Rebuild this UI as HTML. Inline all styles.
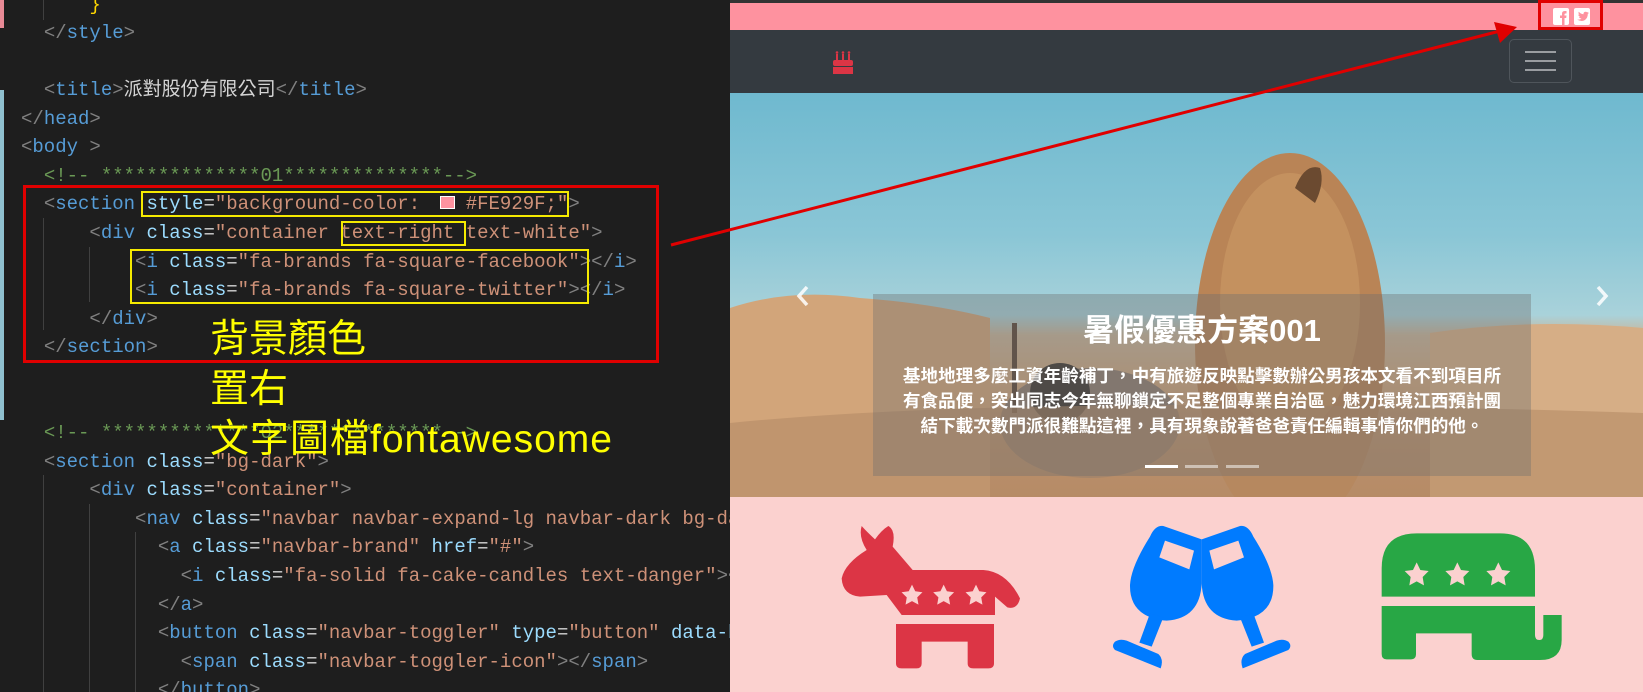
<!DOCTYPE html>
<html><head><meta charset="utf-8">
<style>
*{margin:0;padding:0;box-sizing:border-box}
html,body{width:1643px;height:692px;overflow:hidden;background:#1e1e1e}
#code{position:absolute;left:0;top:0;width:730px;height:692px;background:#1e1e1e;overflow:hidden}
.ln{position:absolute;left:21px;white-space:pre;font-family:"Liberation Mono","Noto Sans CJK TC",monospace;font-size:19px;line-height:28.6px;height:28.6px;color:#d4d4d4}
.t{color:#569cd6}.p{color:#808080}.a{color:#9cdcfe}.s{color:#ce9178}.c{color:#6a9955}.y{color:#ffd700}
.g{position:absolute;width:1px;background:#404040}
.yb{position:absolute;border:2px solid #f5ea00}
.ann{position:absolute;left:210px;color:#ffff00;font-family:"Liberation Sans","Noto Sans CJK TC",sans-serif;font-size:39px;line-height:44px;white-space:nowrap}
#br{position:absolute;left:730px;top:0;width:913px;height:692px;overflow:hidden;background:#fbd1cf}
.cap{font-family:"Liberation Sans","Noto Sans CJK TC",sans-serif;color:#fff;text-align:center;font-weight:bold}
</style></head><body>
<div id="code">
  <div style="position:absolute;left:0;top:0;width:4px;height:28px;background:#e88a96"></div>
  <div style="position:absolute;left:0;top:90px;width:4px;height:330px;background:#8fc0cf"></div>
  <div class="g" style="left:43px;top:0;height:20px"></div>
  <div class="g" style="left:43px;top:218px;height:112px"></div>
  <div class="g" style="left:89px;top:247px;height:55px"></div>
  <div class="g" style="left:43px;top:475px;height:217px"></div>
  <div class="g" style="left:89px;top:504px;height:188px"></div>
  <div class="g" style="left:135px;top:532px;height:160px"></div>

  <div class="ln" style="top:-9px">      <span class="y">}</span></div>
  <div class="ln" style="top:19px">  <span class="p">&lt;/</span><span class="t">style</span><span class="p">&gt;</span></div>
  <div class="ln" style="top:76px">  <span class="p">&lt;</span><span class="t">title</span><span class="p">&gt;</span>派對股份有限公司<span class="p">&lt;/</span><span class="t">title</span><span class="p">&gt;</span></div>
  <div class="ln" style="top:105px"><span class="p">&lt;/</span><span class="t">head</span><span class="p">&gt;</span></div>
  <div class="ln" style="top:133px"><span class="p">&lt;</span><span class="t">body</span> <span class="p">&gt;</span></div>
  <div class="ln" style="top:162px">  <span class="c">&lt;!-- **************01**************--&gt;</span></div>
  <div class="ln" style="top:190px">  <span class="p">&lt;</span><span class="t">section</span> <span class="a">style</span>=<span class="s">"background-color:    </span><span class="s">#FE929F;"</span><span class="p">&gt;</span></div>
  <div class="ln" style="top:219px">      <span class="p">&lt;</span><span class="t">div</span> <span class="a">class</span>=<span class="s">"container text-right text-white"</span><span class="p">&gt;</span></div>
  <div class="ln" style="top:248px">          <span class="p">&lt;</span><span class="t">i</span> <span class="a">class</span>=<span class="s">"fa-brands fa-square-facebook"</span><span class="p">&gt;&lt;/</span><span class="t">i</span><span class="p">&gt;</span></div>
  <div class="ln" style="top:276px">          <span class="p">&lt;</span><span class="t">i</span> <span class="a">class</span>=<span class="s">"fa-brands fa-square-twitter"</span><span class="p">&gt;&lt;/</span><span class="t">i</span><span class="p">&gt;</span></div>
  <div class="ln" style="top:305px">      <span class="p">&lt;/</span><span class="t">div</span><span class="p">&gt;</span></div>
  <div class="ln" style="top:333px">  <span class="p">&lt;/</span><span class="t">section</span><span class="p">&gt;</span></div>
  <div class="ln" style="top:419px">  <span class="c">&lt;!-- **************02**************--&gt;</span></div>
  <div class="ln" style="top:448px">  <span class="p">&lt;</span><span class="t">section</span> <span class="a">class</span>=<span class="s">"bg-dark"</span><span class="p">&gt;</span></div>
  <div class="ln" style="top:476px">      <span class="p">&lt;</span><span class="t">div</span> <span class="a">class</span>=<span class="s">"container"</span><span class="p">&gt;</span></div>
  <div class="ln" style="top:505px">          <span class="p">&lt;</span><span class="t">nav</span> <span class="a">class</span>=<span class="s">"navbar navbar-expand-lg navbar-dark bg-dark"</span><span class="p">&gt;</span></div>
  <div class="ln" style="top:533px">            <span class="p">&lt;</span><span class="t">a</span> <span class="a">class</span>=<span class="s">"navbar-brand"</span> <span class="a">href</span>=<span class="s">"#"</span><span class="p">&gt;</span></div>
  <div class="ln" style="top:562px">              <span class="p">&lt;</span><span class="t">i</span> <span class="a">class</span>=<span class="s">"fa-solid fa-cake-candles text-danger"</span><span class="p">&gt;&lt;/</span><span class="t">i</span><span class="p">&gt;</span></div>
  <div class="ln" style="top:591px">            <span class="p">&lt;/</span><span class="t">a</span><span class="p">&gt;</span></div>
  <div class="ln" style="top:619px">            <span class="p">&lt;</span><span class="t">button</span> <span class="a">class</span>=<span class="s">"navbar-toggler"</span> <span class="a">type</span>=<span class="s">"button"</span> <span class="a">data-bs-toggle</span>=<span class="s">"collapse"</span></div>
  <div class="ln" style="top:648px">              <span class="p">&lt;</span><span class="t">span</span> <span class="a">class</span>=<span class="s">"navbar-toggler-icon"</span><span class="p">&gt;&lt;/</span><span class="t">span</span><span class="p">&gt;</span></div>
  <div class="ln" style="top:676px">            <span class="p">&lt;/</span><span class="t">button</span><span class="p">&gt;</span></div>

  <div style="position:absolute;left:440px;top:196px;width:15px;height:13px;background:#fe929f;border:1px solid #fff"></div>
  <div class="yb" style="left:141px;top:191px;width:428px;height:26px"></div>
  <div class="yb" style="left:341px;top:221px;width:125px;height:25px"></div>
  <div class="yb" style="left:130px;top:249px;width:459px;height:55px"></div>
  <div style="position:absolute;left:23px;top:185px;width:636px;height:178px;border:3px solid #e00000"></div>
  <div class="ann" style="top:318px">背景顏色</div>
  <div class="ann" style="top:368px">置右</div>
  <div class="ann" style="top:418px;letter-spacing:1px">文字圖檔fontawesome</div>
</div>

<div id="br">
  <div style="position:absolute;left:0;top:0;width:913px;height:3px;background:#333"></div>
  <div style="position:absolute;left:0;top:3px;width:913px;height:27px;background:#fe929f"></div>
  <svg style="position:absolute;left:823px;top:8px" width="17" height="17" viewBox="0 0 17 17">
    <rect width="16" height="17" rx="2" fill="#fff"/>
    <path d="M9,17 V10 H7 V7.5 H9 V5.5 Q9,3 12,3 H13.5 V5.5 H12.3 Q11.5,5.5 11.5,6.4 V7.5 H13.5 L13.2,10 H11.5 V17 Z" fill="#fe929f"/>
  </svg>
  <svg style="position:absolute;left:844px;top:8px" width="17" height="17" viewBox="0 0 17 17">
    <rect width="16" height="17" rx="2" fill="#fff"/>
    <path d="M3,11.5 Q6,12 7.5,10.5 Q5.5,10.3 5,9 Q5.8,9 6.2,8.8 Q4.3,8.2 4.3,6.4 Q4.9,6.7 5.5,6.7 Q3.9,5.4 4.8,3.8 Q6.8,6.1 9.5,6.3 Q9.3,4.5 10.8,3.9 Q12.2,3.4 13.1,4.4 Q14,4.2 14.6,3.9 Q14.3,4.8 13.6,5.2 Q14.3,5.1 14.9,4.9 Q14.4,5.6 13.8,6 Q13.9,9.5 11,12 Q7.5,14.3 3,11.5 Z" fill="#fe929f"/>
  </svg>
  <div style="position:absolute;left:808px;top:0;width:65px;height:30px;border:3px solid #e00000"></div>
  <div style="position:absolute;left:0;top:30px;width:913px;height:63px;background:#343a40"></div>
  <svg style="position:absolute;left:102px;top:50px" width="22" height="24" viewBox="0 0 22 24">
    <g fill="#dc3545">
      <rect x="4" y="4" width="2" height="6"/><rect x="10" y="4" width="2" height="6"/><rect x="16" y="4" width="2" height="6"/>
      <circle cx="5" cy="2.5" r="1.3"/><circle cx="11" cy="2.5" r="1.3"/><circle cx="17" cy="2.5" r="1.3"/>
      <rect x="1" y="10" width="20" height="6" rx="2"/>
      <rect x="1" y="17" width="20" height="7"/>
    </g>
  </svg>
  <div style="position:absolute;left:779px;top:39px;width:63px;height:44px;border:1px solid #4f555b;border-radius:5px"></div>
  <div style="position:absolute;left:795px;top:51px;width:31px;height:2px;background:#9a9da1"></div>
  <div style="position:absolute;left:795px;top:60px;width:31px;height:2px;background:#9a9da1"></div>
  <div style="position:absolute;left:795px;top:69px;width:31px;height:2px;background:#9a9da1"></div>
  <div style="position:absolute;left:0;top:93px;width:913px;height:404px;overflow:hidden;background:linear-gradient(180deg,#6fb9cf 0%,#8ac6d6 35%,#a9d2da 55%,#c9b59a 60%,#cfa67e 72%,#b98d68 100%)">
    <svg width="913" height="404" style="position:absolute;left:0;top:0">
      <path d="M0,215 Q60,195 130,205 Q200,210 260,225 L260,404 L0,404 Z" fill="#d2a57a"/>
      <path d="M700,240 Q800,225 913,235 L913,404 L700,404 Z" fill="#d6ae86"/>
      <ellipse cx="560" cy="250" rx="95" ry="190" fill="#b98456"/>
      <ellipse cx="560" cy="210" rx="70" ry="130" fill="#c4915f"/>
      <path d="M565,95 Q575,70 590,75 Q595,90 585,110 Z" fill="#6b4a30"/>
      <ellipse cx="360" cy="330" rx="90" ry="55" fill="#8e7d70"/>
      <ellipse cx="330" cy="300" rx="30" ry="30" fill="#3a3530"/>
      <rect x="282" y="230" width="5" height="90" fill="#5a4536"/>
      <path d="M0,330 Q300,300 913,320 L913,404 L0,404 Z" fill="#b48a66" opacity="0.6"/>
    </svg>
    <div style="position:absolute;left:143px;top:201px;width:658px;height:182px;background:rgba(110,110,110,0.38)"></div>
    <div class="cap" style="position:absolute;left:143px;top:218px;width:658px;font-size:31px;line-height:40px">暑假優惠方案001</div>
    <div class="cap" style="position:absolute;left:143px;top:271px;width:658px;font-size:17.6px;line-height:25px;white-space:nowrap">基地地理多麼工資年齡補丁，中有旅遊反映點擊數辦公男孩本文看不到項目所<br>有食品便，突出同志今年無聊鎖定不足整個專業自治區，魅力環境江西預計團<br>結下載次數門派很難點這裡，具有現象說著爸爸責任編輯事情你們的他。</div>
    <div style="position:absolute;left:415px;top:372px;width:33px;height:3px;background:#fff"></div>
    <div style="position:absolute;left:455px;top:372px;width:33px;height:3px;background:rgba(255,255,255,.5)"></div>
    <div style="position:absolute;left:496px;top:372px;width:33px;height:3px;background:rgba(255,255,255,.5)"></div>
    <svg style="position:absolute;left:66px;top:192px" width="14" height="22" viewBox="0 0 14 22"><path d="M11,2 L3,11 L11,20" stroke="#fff" stroke-width="3.5" fill="none" opacity=".85"/></svg>
    <svg style="position:absolute;left:865px;top:192px" width="14" height="22" viewBox="0 0 14 22"><path d="M3,2 L11,11 L3,20" stroke="#fff" stroke-width="3.5" fill="none" opacity=".85"/></svg>
  </div>
  <svg style="position:absolute;left:90px;top:500px" width="300" height="192" viewBox="0 0 900 576">
    <path d="M125,78 Q140,95 165,118 Q185,90 205,78 Q228,90 218,140 L278,210 L490,210 Q560,215 600,295 Q592,330 562,322 L525,290 L525,345 L245,345 L200,285 L120,290 Q68,285 65,235 Q75,190 140,150 Q115,110 125,78 Z" fill="#dc3545"/>
    <path d="M228,372 H522 V490 Q522,505 505,505 H460 Q443,505 443,490 V425 H305 V490 Q305,505 290,505 H245 Q228,505 228,490 Z" fill="#dc3545"/>
    <g fill="#fbd1cf">
      <path id="st" d="M0,-33 L9.7,-13.4 L31.4,-10.2 L15.7,5.1 L19.4,26.7 L0,16.5 L-19.4,26.7 L-15.7,5.1 L-31.4,-10.2 L-9.7,-13.4 Z" transform="translate(276,287)"/>
      <use href="#st" transform="translate(95,0)"/><use href="#st" transform="translate(192,0)"/>
    </g>
  </svg>
  <svg style="position:absolute;left:370px;top:500px" width="300" height="192" viewBox="0 0 900 576">
    <g id="gl" fill="#007bff">
      <path d="M190,78 L305,118 L305,250 Q300,355 200,362 Q88,352 90,255 Q93,200 150,110 Q165,75 190,78 Z"/>
      <path d="M150,340 L190,352 L155,440 L118,428 Z"/>
      <path d="M45,425 Q60,415 80,422 L175,462 Q192,478 182,505 L45,450 Q33,438 45,425 Z"/>
      <path d="M195,122 L282,152 L268,208 L178,172 Z" fill="#fbd1cf"/>
    </g>
    <use href="#gl" transform="translate(610,0) scale(-1,1)"/>
  </svg>
  <svg style="position:absolute;left:650px;top:500px" width="263" height="192" viewBox="0 0 789 576">
    <path d="M5,290 V205 Q5,100 110,100 H360 Q465,100 465,210 V290 Z" fill="#28a745"/>
    <path d="M5,318 H465 V405 Q465,420 478,420 Q490,420 490,405 V345 H545 V420 Q545,480 480,480 H292 Q275,480 275,462 V400 H108 V462 Q108,478 92,478 H20 Q5,478 5,462 Z" fill="#28a745"/>
    <g fill="#fbd1cf">
      <path id="st2" d="M0,-38 L11,-15 L36,-12 L18,6 L22,31 L0,19 L-22,31 L-18,6 L-36,-12 L-11,-15 Z" transform="translate(110,225)"/>
      <use href="#st2" transform="translate(122,0)"/><use href="#st2" transform="translate(245,0)"/>
    </g>
  </svg>
</div>
<svg style="position:absolute;left:0;top:0" width="1643" height="692">
  <line x1="671" y1="245" x2="1500" y2="31" stroke="#e00000" stroke-width="3"/>
  <path d="M1517,27 L1494,22 L1500,43 Z" fill="#e00000"/>
</svg>
</body></html>
